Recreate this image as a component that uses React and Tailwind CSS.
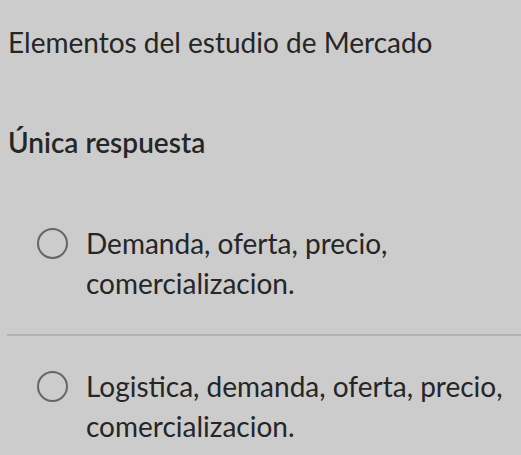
import React from 'react';

function Radio() {
  return (
    <span className="mt-[5px] block h-[31px] w-[31px] shrink-0 rounded-full border-2 border-[#666666]" />
  );
}

export default function App() {
  const options = [
    'Demanda, oferta, precio, comercializacion.',
    'Logistica, demanda, oferta, precio, comercializacion.',
  ];

  return (
    <div
      className="h-[455px] w-[521px] overflow-hidden bg-[#cccccc] text-[#262626]"
      style={{ fontFamily: 'Lato, "Open Sans", sans-serif' }}
    >
      <h1 className="pl-[8px] pt-[22px] text-[28px] leading-[40px]">Elementos del estudio de Mercado</h1>
      <h2 className="mt-[60px] pl-[8px] text-[28px] font-semibold leading-[40px]">Única respuesta</h2>

      <div className="mt-[61px]">
        {options.map((text, i) => (
          <div key={i}>
            {i > 0 && <div className="ml-[7px] mt-[31px] mb-[30px] h-[2px] bg-[#b3b3b3]" />}
            <div className="flex gap-[18px] pl-[37px]">
              <Radio />
              <p className="text-[28px] leading-[40px]">{text}</p>
            </div>
          </div>
        ))}
      </div>
    </div>
  );
}
